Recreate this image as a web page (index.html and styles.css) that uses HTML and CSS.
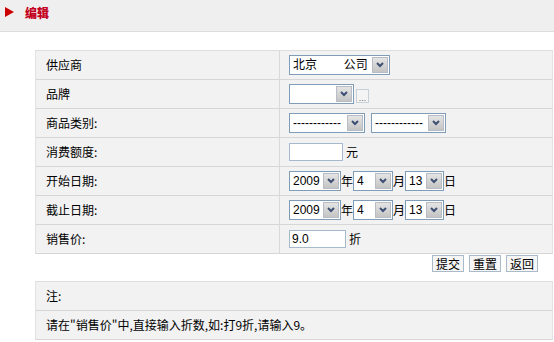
FILE: index.html
```html
<!DOCTYPE html>
<html lang="zh">
<head>
    <meta charset="UTF-8">
    <title>编辑</title>
    <link rel="stylesheet" href="styles.css">
</head>
<body>
    <div class="title-bar">
        <svg class="mark" width="9" height="10" viewBox="0 0 9 10"><polygon points="0,0 9,5 0,10" fill="#cc0000"/></svg>
        <span class="title">编辑</span>
    </div>

    <div class="page">
        <table class="form">
            <tr>
                <td class="label">供应商</td>
                <td class="field"><div class="line">
                    <span class="combo w-supplier"><select><option>北京&nbsp;&nbsp;&nbsp;&nbsp;&nbsp;&nbsp;&nbsp;&nbsp;公司</option></select><span class="drop"><svg width="8" height="6" viewBox="0 0 8 6"><polyline points="1,1 4,4 7,1" fill="none" stroke="#3d4f73" stroke-width="2"/></svg></span></span>
                </div></td>
            </tr>
            <tr>
                <td class="label">品牌</td>
                <td class="field"><div class="line">
                    <span class="combo w-brand"><select><option></option></select><span class="drop"><svg width="8" height="6" viewBox="0 0 8 6"><polyline points="1,1 4,4 7,1" fill="none" stroke="#3d4f73" stroke-width="2"/></svg></span></span>
                    <button class="more">...</button>
                </div></td>
            </tr>
            <tr>
                <td class="label">商品类别:</td>
                <td class="field"><div class="line gap">
                    <span class="combo w-cat"><select><option>------------</option></select><span class="drop"><svg width="8" height="6" viewBox="0 0 8 6"><polyline points="1,1 4,4 7,1" fill="none" stroke="#3d4f73" stroke-width="2"/></svg></span></span>
                    <span class="combo w-cat2"><select><option>------------</option></select><span class="drop"><svg width="8" height="6" viewBox="0 0 8 6"><polyline points="1,1 4,4 7,1" fill="none" stroke="#3d4f73" stroke-width="2"/></svg></span></span>
                </div></td>
            </tr>
            <tr>
                <td class="label">消费额度:</td>
                <td class="field"><div class="line">
                    <input class="text w-amount" type="text" value=""><span class="unit">元</span>
                </div></td>
            </tr>
            <tr>
                <td class="label">开始日期:</td>
                <td class="field"><div class="line">
                    <span class="combo w-year"><select><option>2009</option></select><span class="drop"><svg width="8" height="6" viewBox="0 0 8 6"><polyline points="1,1 4,4 7,1" fill="none" stroke="#3d4f73" stroke-width="2"/></svg></span></span>年<span class="combo w-month"><select><option>4</option></select><span class="drop"><svg width="8" height="6" viewBox="0 0 8 6"><polyline points="1,1 4,4 7,1" fill="none" stroke="#3d4f73" stroke-width="2"/></svg></span></span>月<span class="combo w-day"><select><option>13</option></select><span class="drop"><svg width="8" height="6" viewBox="0 0 8 6"><polyline points="1,1 4,4 7,1" fill="none" stroke="#3d4f73" stroke-width="2"/></svg></span></span>日
                </div></td>
            </tr>
            <tr>
                <td class="label">截止日期:</td>
                <td class="field"><div class="line">
                    <span class="combo w-year"><select><option>2009</option></select><span class="drop"><svg width="8" height="6" viewBox="0 0 8 6"><polyline points="1,1 4,4 7,1" fill="none" stroke="#3d4f73" stroke-width="2"/></svg></span></span>年<span class="combo w-month"><select><option>4</option></select><span class="drop"><svg width="8" height="6" viewBox="0 0 8 6"><polyline points="1,1 4,4 7,1" fill="none" stroke="#3d4f73" stroke-width="2"/></svg></span></span>月<span class="combo w-day"><select><option>13</option></select><span class="drop"><svg width="8" height="6" viewBox="0 0 8 6"><polyline points="1,1 4,4 7,1" fill="none" stroke="#3d4f73" stroke-width="2"/></svg></span></span>日
                </div></td>
            </tr>
            <tr>
                <td class="label">销售价:</td>
                <td class="field"><div class="line">
                    <input class="text w-price" type="text" value="9.0"><span class="unit">折</span>
                </div></td>
            </tr>
        </table>

        <div class="actions">
            <button class="btn">提交</button>
            <button class="btn">重置</button>
            <button class="btn">返回</button>
        </div>

        <table class="form notes">
            <tr><td class="note">注:</td></tr>
            <tr><td class="note">请在"销售价"中,直接输入折数,如:打9折,请输入9。</td></tr>
        </table>
    </div>
</body>
</html>
```

FILE: styles.css
```css
body {
    margin: 0;
    font-family: "Liberation Sans", "Noto Sans CJK SC", sans-serif;
    font-size: 12px;
    color: #000;
    background: #fff;
}
.title-bar {
    height: 32px;
    background: #efefef;
    border-bottom: 1px solid #dddddd;
    display: flex;
    align-items: center;
    padding: 0 0 7px 5px;
    box-sizing: border-box;
}
.mark {
    margin-right: 11px;
}
.title {
    font-family: "Noto Sans CJK SC", sans-serif;
    font-weight: 900;
    color: #c4001e;
    font-size: 12px;
}
.page {
    padding: 18px 1px 0 35px;
}
.form {
    width: 100%;
    border-collapse: separate;
    border-spacing: 0;
    border-top: 1px solid #dedede;
}
.form td {
    height: 28px;
    padding: 0;
    background: #f2f2f2;
    border-bottom: 1px solid #d6d6d6;
    font-family: "Noto Sans CJK SC", sans-serif;
    line-height: 14px;
}
.form td.label {
    width: 233px;
    padding-left: 10px;
    border-left: 1px solid #e2e2e2;
    border-right: 1px solid #d9d9d9;
}
.form td.field {
    padding-left: 9px;
    border-right: 1px solid #e2e2e2;
}
.line {
    display: flex;
    align-items: center;
}
.line.gap {
    gap: 6px;
}
.combo {
    display: inline-flex;
    height: 20px;
    box-sizing: border-box;
    border: 1px solid #7f9db9;
    background: #fff;
}
.combo select {
    appearance: none;
    -webkit-appearance: none;
    border: 0;
    background: transparent;
    flex: 1;
    min-width: 0;
    padding: 0 0 0 3px;
    font-family: "Liberation Sans", "Noto Sans CJK SC", sans-serif;
    font-size: 12px;
    color: #000;
    outline: none;
}
.drop {
    width: 16px;
    margin: 1px;
    box-sizing: border-box;
    border: 1px solid #b8bcc4;
    background: linear-gradient(#e4e4e4, #c4c4c4);
    display: flex;
    align-items: center;
    justify-content: center;
}
.w-supplier { width: 101px; }
.w-brand { width: 65px; }
.w-cat { width: 76px; }
.w-cat2 { width: 75px; }
.w-year { width: 52px; }
.w-month { width: 40px; }
.w-day { width: 39px; }
.more {
    width: 13px;
    height: 14px;
    margin: 4px 0 0 2px;
    padding: 0;
    border: 1px solid #c9d0d8;
    background: #f4f4f4;
    font-size: 9px;
    line-height: 16px;
    color: #666;
    overflow: hidden;
}
.text {
    height: 18px;
    box-sizing: border-box;
    border: 1px solid #a7bacd;
    padding: 0 2px;
    font-family: "Liberation Sans", sans-serif;
    font-size: 12px;
    outline: none;
}
.w-amount { width: 54px; }
.w-price { width: 57px; }
.unit {
    margin-left: 3px;
}
.actions {
    display: flex;
    justify-content: flex-end;
    gap: 5px;
    padding: 1px 15px 0 0;
    height: 27px;
    box-sizing: border-box;
}
.btn {
    height: 17px;
    width: 32px;
    padding: 0;
    border: 1px solid #a9bacb;
    background: #f6f6f6;
    font-family: "Noto Sans CJK SC", sans-serif;
    font-size: 12px;
    line-height: 15px;
    color: #000;
}
.notes td.note {
    padding-left: 10px;
    border-left: 1px solid #e2e2e2;
    border-right: 1px solid #e2e2e2;
}
```
